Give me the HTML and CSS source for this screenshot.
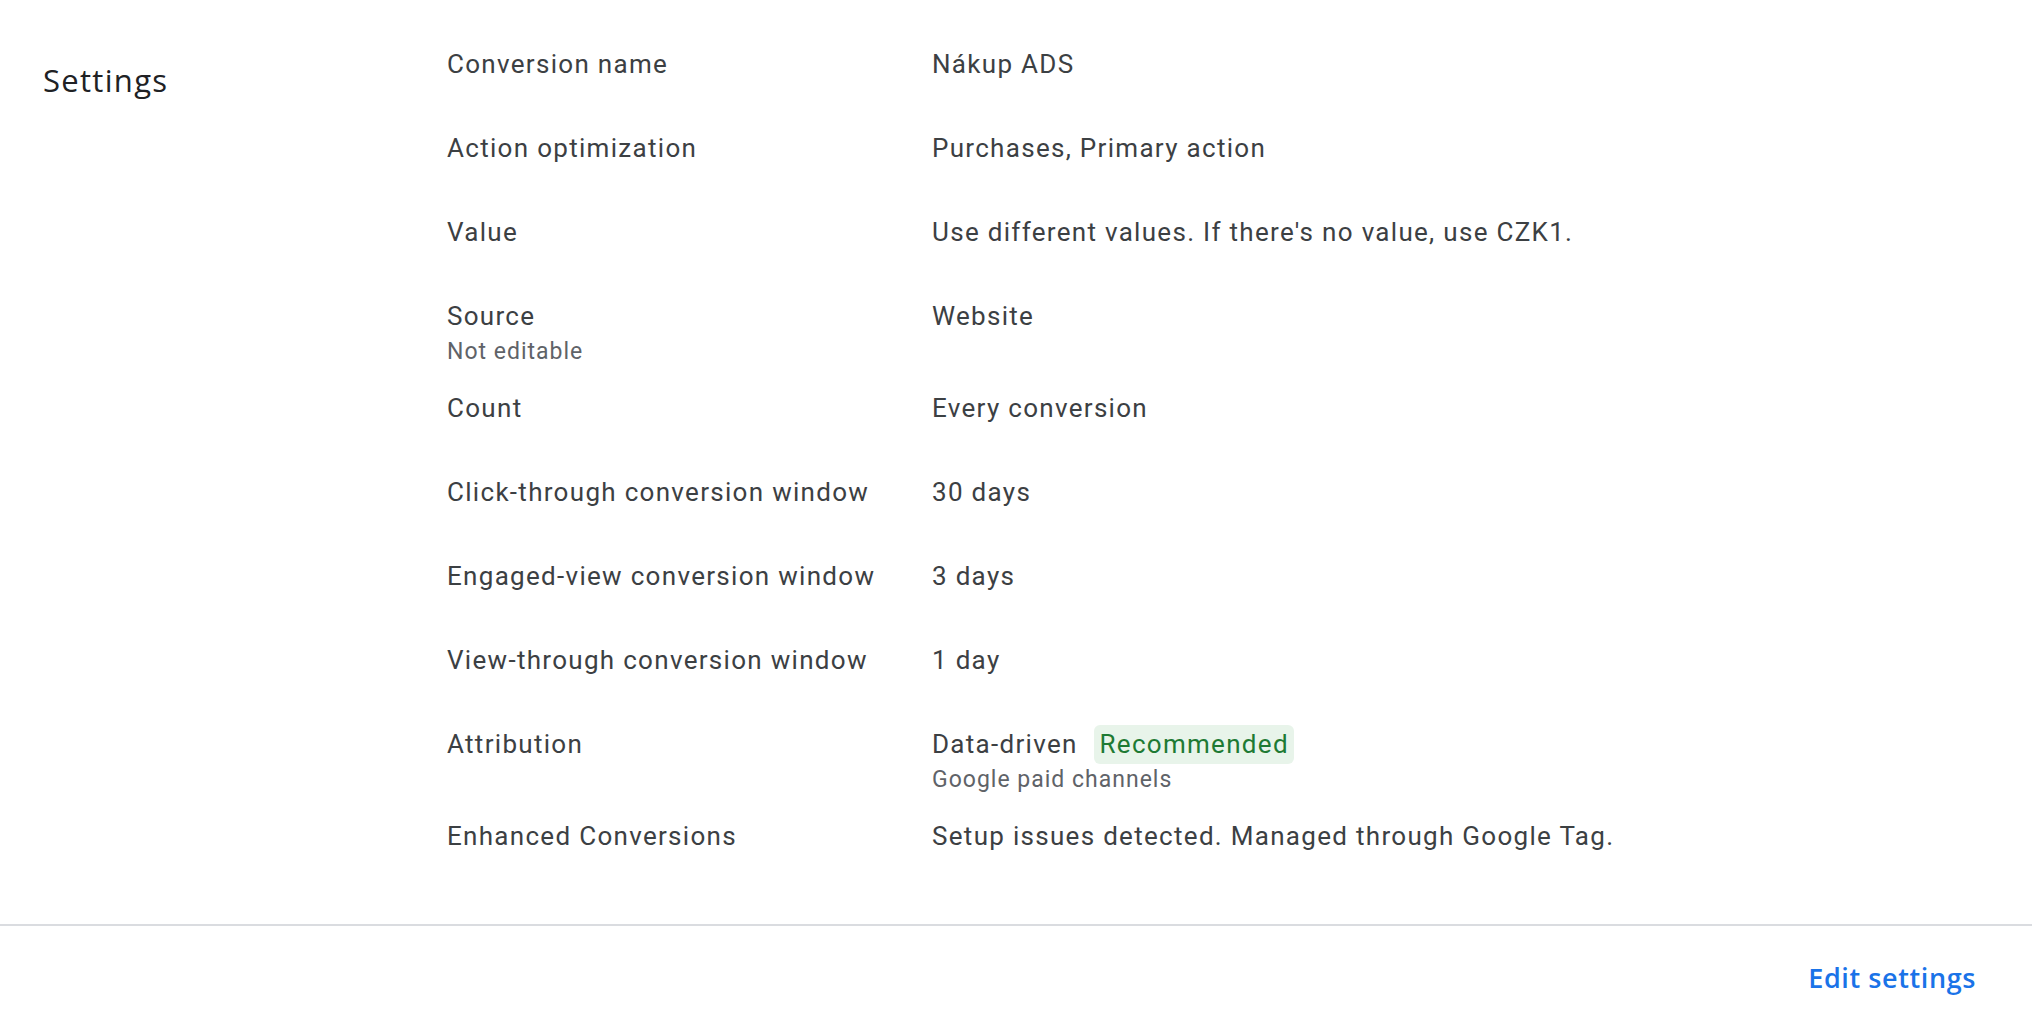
FILE: index.html
```html
<!DOCTYPE html>
<html lang="en">
<head>
<meta charset="utf-8">
<title>Settings</title>
<link rel="stylesheet" href="styles.css">
</head>
<body>
<section class="settings">
  <h2 class="settings-title">Settings</h2>
  <div class="settings-list">
    <div class="row"><div class="label">Conversion name</div><div class="value">Nákup ADS</div></div>
    <div class="row"><div class="label">Action optimization</div><div class="value">Purchases, Primary action</div></div>
    <div class="row"><div class="label">Value</div><div class="value">Use different values. If there's no value, use CZK1.</div></div>
    <div class="row"><div class="label">Source<div class="sub">Not editable</div></div><div class="value">Website</div></div>
    <div class="row"><div class="label">Count</div><div class="value">Every conversion</div></div>
    <div class="row"><div class="label">Click-through conversion window</div><div class="value">30 days</div></div>
    <div class="row"><div class="label">Engaged-view conversion window</div><div class="value">3 days</div></div>
    <div class="row"><div class="label">View-through conversion window</div><div class="value">1 day</div></div>
    <div class="row"><div class="label">Attribution</div><div class="value">Data-driven <span class="chip">Recommended</span><div class="sub">Google paid channels</div></div></div>
    <div class="row"><div class="label">Enhanced Conversions</div><div class="value">Setup issues detected. Managed through Google Tag.</div></div>
  </div>
</section>
<footer class="actions">
  <a class="edit-link" href="#">Edit settings</a>
</footer>
</body>
</html>
```
FILE: styles.css
```css
html, body {
  margin: 0;
  padding: 0;
  background: #ffffff;
}
body {
  font-family: Roboto, "Liberation Sans", sans-serif;
  color: #3c4043;
}
.settings {
  display: flex;
  align-items: flex-start;
  padding: 35.8px 0 32.5px 43px;
  border-bottom: 2px solid #dadce0;
}
.settings-title {
  width: 404px;
  margin: 24px 0 0 0;
  font-family: "Open Sans", sans-serif;
  font-weight: 500;
  font-size: 31px;
  line-height: 40px;
  letter-spacing: 1.3px;
  color: #202124;
}
.settings-list {
  display: flex;
  flex-direction: column;
  flex: 1;
}
.row {
  display: grid;
  grid-template-columns: 485px 1fr;
  box-sizing: border-box;
  min-height: 84px;
  padding: 10px 0;
  font-size: 26px;
  line-height: 36px;
  letter-spacing: 1.3px;
}
.label, .value {
  color: #3c4043;
}
.sub {
  font-size: 23px;
  line-height: 36px;
  letter-spacing: 1px;
  color: #5f6368;
}
.chip {
  margin-left: 9px;
  padding: 4px 5px 5px;
  border-radius: 6px;
  background: #e8f4ea;
  color: #1e7a34;
}
.actions {
  display: flex;
  justify-content: flex-end;
  padding: 31.5px 56px 0 0;
}
.edit-link {
  font-family: "Open Sans", sans-serif;
  font-weight: 600;
  font-size: 27px;
  line-height: 40px;
  letter-spacing: 0.6px;
  color: #1a73e8;
  text-decoration: none;
}
```
